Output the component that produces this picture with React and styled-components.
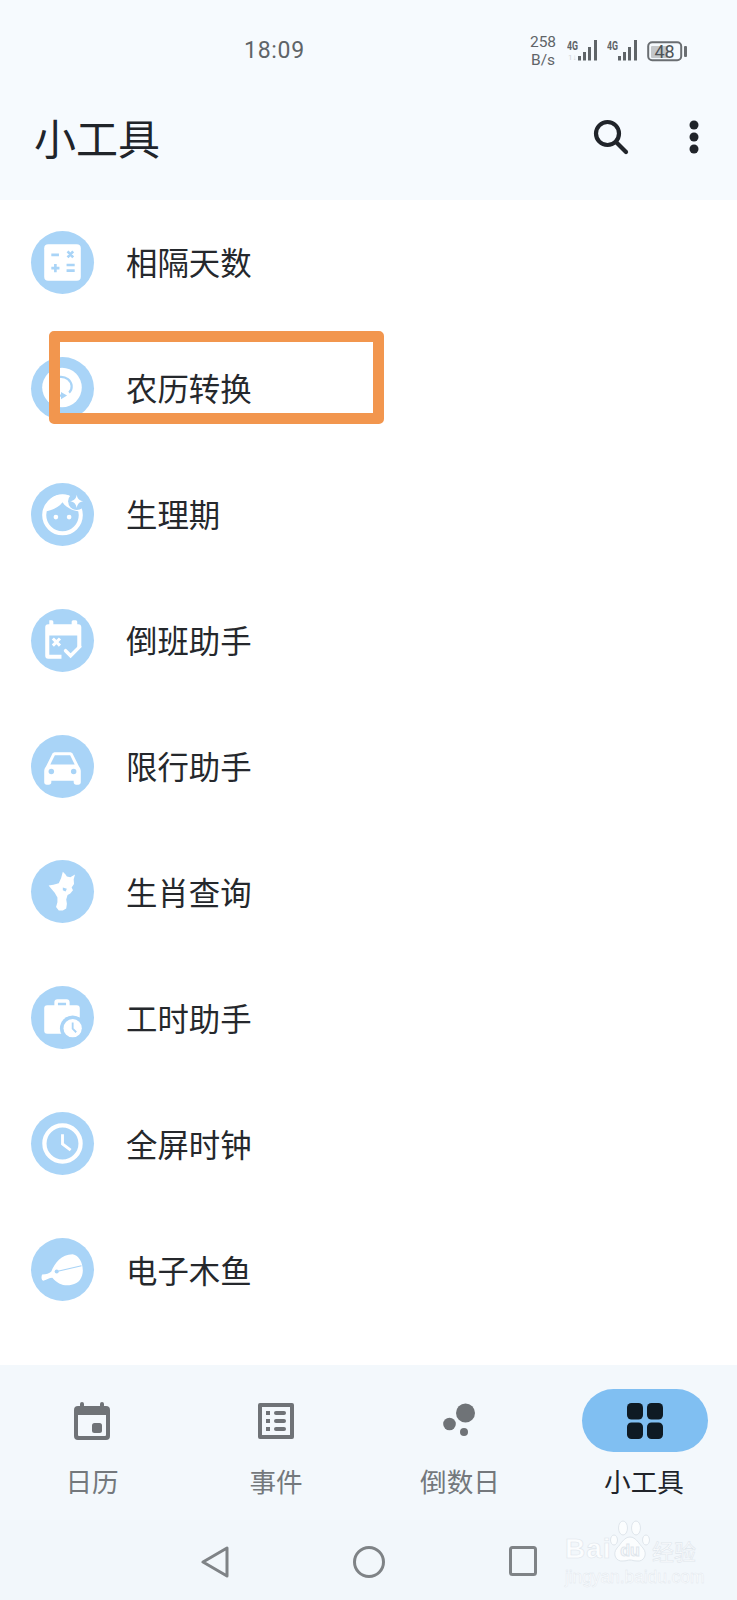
import React from 'react';
import styled, { createGlobalStyle } from 'styled-components';

const CJK = `"Noto Sans CJK SC", "Noto Sans", sans-serif`;
const BLUE = '#a9d4f7';
const GREY = '#6f7377';

const GlobalStyle = createGlobalStyle`
    html, body {
        margin: 0;
        padding: 0;
        background: #fff;
    }
`;

const Screen = styled.div`
    position: relative;
    display: flex;
    flex-direction: column;
    width: 737px;
    height: 1600px;
    overflow: hidden;
    background: #fff;
    font-family: ${CJK};
`;

const Top = styled.header`
    height: 199.5px;
    background: #f6fafe;
`;
const StatusBar = styled.div`
    display: flex;
    align-items: center;
    height: 101px;
    padding: 0 49px 0 244px;
    color: #5f6468;
    font-family: Roboto, sans-serif;
`;
const Time = styled.span`
    font-size: 23px;
    letter-spacing: 0.7px;
`;
const StatusRight = styled.div`
    display: flex;
    align-items: center;
    gap: 4px;
    margin-left: auto;
`;
const Speed = styled.div`
    width: 30px;
    margin-right: 5px;
    font-size: 15.5px;
    line-height: 18px;
    text-align: center;
`;
const TitleRow = styled.div`
    display: flex;
    align-items: center;
    height: 72px;
    padding: 0 38px 0 34px;
`;
const Title = styled.h1`
    flex: 1;
    margin: 0;
    color: #20242a;
    font-size: 42px;
    font-weight: 400;
    line-height: 72px;
`;
const HeaderActions = styled.div`
    display: flex;
    align-items: center;
    gap: 60px;
`;

const List = styled.main`
    flex: 1;
    background: #fff;
`;
const Row = styled.div`
    display: flex;
    align-items: center;
    gap: 32px;
    height: 125.9px;
    padding-left: 31px;
`;
const Badge = styled.div`
    display: flex;
    flex: none;
    width: 63px;
    height: 63px;
    border-radius: 50%;
    background: ${BLUE};
`;
const RowLabel = styled.span`
    color: #25282c;
    font-size: 31.4px;
    line-height: 40px;
`;

const Marker = styled.div`
    position: absolute;
    left: 49px;
    top: 331px;
    box-sizing: border-box;
    width: 335px;
    height: 93px;
    border: 11px solid #f2964e;
    border-radius: 5px;
`;

const TabBar = styled.nav`
    display: grid;
    flex: none;
    grid-template-columns: repeat(4, 184px);
    height: 155px;
    padding-top: 24px;
    box-sizing: border-box;
    background: #f3f8fc;
`;
const Tab = styled.div`
    display: flex;
    flex-direction: column;
    align-items: center;
`;
const TabIcon = styled.div`
    display: flex;
    align-items: center;
    justify-content: center;
    width: 126px;
    height: 63px;
    margin-left: ${(p) => (p.$active ? '2px' : '0')};
    border-radius: 32px;
    background: ${(p) => (p.$active ? '#80bff2' : 'transparent')};
`;
const TabLabel = styled.span`
    margin-top: 10px;
    color: ${(p) => (p.$active ? '#20242a' : '#74787c')};
    font-size: 26.6px;
    line-height: 38px;
`;

const NavBar = styled.div`
    display: flex;
    flex: none;
    align-items: flex-start;
    height: 80px;
    padding: 26px 0 0 201px;
    box-sizing: border-box;
    gap: 124px;
    background: #f2f7fb;
`;

const Watermark = styled.div`
    position: absolute;
    left: 565px;
    top: 1518px;
    width: 135px;
    height: 68px;
    color: #fbfdfe;
    -webkit-text-stroke: 0.6px #dfe6ec;
    font-family: "Liberation Sans", sans-serif;
`;
const MarkBai = styled.span`
    position: absolute;
    left: 0;
    top: 15px;
    font-size: 28px;
    font-weight: 700;
    letter-spacing: 1px;
    line-height: 32px;
`;
const MarkCn = styled.span`
    position: absolute;
    left: 87px;
    top: 19px;
    font-family: ${CJK};
    font-size: 22px;
    line-height: 26px;
`;
const MarkUrl = styled.span`
    position: absolute;
    left: 0;
    top: 49px;
    font-size: 17.5px;
    letter-spacing: -0.1px;
    line-height: 20px;
    -webkit-text-stroke: 0.4px #dfe6ec;
`;
const MarkPaw = styled.svg`
    position: absolute;
    left: 44px;
    top: 0;
`;

const Glyph = ({ children }) => (
    <svg width="63" height="63" viewBox="0 0 62 62" fill="#fff">
        {children}
    </svg>
);

const CalcIcon = () => (
    <Glyph>
        <rect x="13" y="13" width="36" height="36" rx="4" />
        <g stroke={BLUE} strokeWidth="2.6" fill="none">
            <path d="M20 23.5h7.5M36 20l5.500 6M41.500 20L36 26M20 36.500h8M24 32.500v8M35 33.500h8M35 39h8" />
        </g>
    </Glyph>
);
const LunarIcon = () => (
    <Glyph>
        <circle cx="30.500" cy="30" r="19.500" />
        <path d="M28.500 19.500c6-.5 11 3.500 11.500 9 .2 2.500-.7 5-2.500 6.500" stroke={BLUE} strokeWidth="2.200" fill="none" />
        <path d="M24 38h7" stroke={BLUE} strokeWidth="2.200" fill="none" />
        <path d="M29.500 34.500v7l6-3.500z" fill={BLUE} />
    </Glyph>
);
const FaceIcon = () => (
    <Glyph>
        <circle cx="31" cy="31.500" r="18" fill={BLUE} stroke="#fff" strokeWidth="4" />
        <path d="M14 28c5-1 13-3 17-9 3 5 9 8 17 9-1-11-8-17-17-17s-16 6-17 17z" />
        <circle cx="24.500" cy="33.500" r="2.300" />
        <circle cx="37.500" cy="33.500" r="2.300" />
        <circle cx="45" cy="18" r="8.500" fill={BLUE} />
        <path d="M45 11.500c.8 4 2.500 5.700 6.500 6.500-4 .8-5.700 2.500-6.500 6.500-.8-4-2.500-5.700-6.500-6.500 4-.8 5.700-2.500 6.500-6.500z" />
    </Glyph>
);
const ShiftIcon = () => (
    <Glyph>
        <path d="M18 11h2.500a1.500 1.500 0 0 1 1.500 1.500V15h18v-2.500a1.500 1.500 0 0 1 1.500-1.500H44a1.500 1.500 0 0 1 1.500 1.500V15h1a3 3 0 0 1 3 3v20h-4V26H18v19h12v4H17a3 3 0 0 1-3-3V18a3 3 0 0 1 3-3h1z" />
        <path d="M21.500 29l7 7M28.500 29l-7 7" stroke="#fff" strokeWidth="3" fill="none" />
        <path d="M34 41l5 5 9-9" stroke="#fff" strokeWidth="3.400" fill="none" strokeLinecap="round" />
    </Glyph>
);
const CarIcon = () => (
    <Glyph>
        <path d="M21 18.500c.5-1 1.500-1.500 3-1.500h14c1.500 0 2.500.5 3 1.500l6 12c1 1.500 2 3 2 5v11c0 1.500-1 2.500-2.500 2.500h-2c-1.500 0-2.500-1-2.500-2.500V45H20v1.500c0 1.500-1 2.500-2.500 2.500h-2C14 49 13 48 13 46.500v-11c0-2 1-3.500 2-5z" />
        <path d="M23.500 20h15l4.500 9H19z" fill={BLUE} />
        <circle cx="20" cy="36" r="2.700" fill={BLUE} />
        <circle cx="42" cy="36" r="2.700" fill={BLUE} />
    </Glyph>
);
const ZodiacIcon = () => (
    <Glyph>
        <g transform="translate(-2 -1) scale(.3333)">
            <path d="M100 38L108 46L112 52L122 54L136 46L132 60L133 74L126 84L130 92L122 102L114 106L110 120L112 132L110 146L100 152L88 152L80 142L84 128L84 114L76 100L66 88L58 78L72 76L88 72L95 56Z" />
            <path d="M100 84L112 88L108 96L100 92Z" fill={BLUE} />
        </g>
    </Glyph>
);
const WorkIcon = () => (
    <Glyph>
        <path d="M23 19v-3a3 3 0 0 1 3-3h9a3 3 0 0 1 3 3v3h7a3 3 0 0 1 3 3v25H16a3 3 0 0 1-3-3V22a3 3 0 0 1 3-3h7zm3.500 0h8v-2.500h-8z" fillRule="evenodd" />
        <circle cx="41" cy="41.500" r="12.500" fill={BLUE} />
        <circle cx="41" cy="41.500" r="9" />
        <path d="M41 36v6l3.500 3.500" stroke={BLUE} strokeWidth="1.800" fill="none" />
    </Glyph>
);
const ClockIcon = () => (
    <Glyph>
        <circle cx="31" cy="31" r="17.800" fill="none" stroke="#fff" strokeWidth="4.200" />
        <path d="M31 22v9.500l8 6" stroke="#fff" strokeWidth="2.800" fill="none" />
    </Glyph>
);
const FishIcon = () => (
    <Glyph>
        <path d="M11 36C15 36 18 35 20 33C23 25 30 16 41 16C47 17 51 24 51 32C51 39 47 45 40 46C33 48 26 45 21 39C18 39 15 41 12 42C10 41 10 38 11 36Z" />
        <path d="M25.300 33L49.700 27.300" stroke={BLUE} strokeWidth="1" fill="none" />
        <circle cx="25.300" cy="33" r="2" fill={BLUE} />
    </Glyph>
);

const TOOLS = [
    { label: '相隔天数', Icon: CalcIcon },
    { label: '农历转换', Icon: LunarIcon },
    { label: '生理期', Icon: FaceIcon },
    { label: '倒班助手', Icon: ShiftIcon },
    { label: '限行助手', Icon: CarIcon },
    { label: '生肖查询', Icon: ZodiacIcon },
    { label: '工时助手', Icon: WorkIcon },
    { label: '全屏时钟', Icon: ClockIcon },
    { label: '电子木鱼', Icon: FishIcon },
];

const Signal = ({ sub }) => (
    <svg width="36" height="24" viewBox="0 0 36 24" fill="#5f6468">
        <text x="0" y="11" fontFamily="Roboto, sans-serif" fontSize="12" fontWeight="700" textLength="11" lengthAdjust="spacingAndGlyphs">4G</text>
        {sub && <text x="1" y="21" fontFamily="Roboto, sans-serif" fontSize="8" fill="#cfd3d6">1↓</text>}
        <rect x="11" y="17" width="3" height="4.500" />
        <rect x="16" y="13" width="3" height="8.500" />
        <rect x="21" y="8" width="3" height="13.500" />
        <rect x="27" y="1" width="3" height="20.500" />
    </svg>
);

const Battery = () => (
    <svg width="41" height="24" viewBox="0 0 41 24">
        <rect x="4" y="7" width="17" height="12" rx="1" fill="#c4c7ca" />
        <rect x="1.200" y="3.200" width="33" height="18" rx="4" fill="none" stroke="#6a6e72" strokeWidth="2" />
        <rect x="37" y="7" width="3" height="11" rx="1" fill="#6a6e72" />
        <text x="17.500" y="19" fontFamily="Roboto, sans-serif" fontSize="18" fill="#4f5458" textAnchor="middle">48</text>
    </svg>
);

const SearchIcon = () => (
    <svg width="36" height="36" viewBox="0 0 36 36" fill="none" stroke="#20242a" strokeWidth="4.200" strokeLinecap="round">
        <circle cx="14.500" cy="14.500" r="11.500" />
        <path d="M23 23l10 10" />
    </svg>
);

const MoreIcon = () => (
    <svg width="10" height="34" viewBox="0 0 10 34" fill="#20242a">
        <circle cx="5" cy="5" r="4.500" />
        <circle cx="5" cy="17" r="4.500" />
        <circle cx="5" cy="29" r="4.500" />
    </svg>
);

const CalendarTab = () => (
    <svg width="36" height="38" viewBox="0 0 36 38" fill={GREY}>
        <path d="M6 4V2a2 2 0 0 1 4 0v2h16V2a2 2 0 0 1 4 0v2h2a4 4 0 0 1 4 4v26a4 4 0 0 1-4 4H4a4 4 0 0 1-4-4V8a4 4 0 0 1 4-4zM4 13v20a1 1 0 0 0 1 1h26a1 1 0 0 0 1-1V13z" fillRule="evenodd" />
        <rect x="18" y="21" width="10" height="10" rx="2.500" />
    </svg>
);
const EventsTab = () => (
    <svg width="36" height="36" viewBox="0 0 36 36" fill={GREY}>
        <path d="M2 0h32a2 2 0 0 1 2 2v32a2 2 0 0 1-2 2H2a2 2 0 0 1-2-2V2a2 2 0 0 1 2-2zm2 4v28h28V4z" fillRule="evenodd" />
        <rect x="8" y="8" width="4" height="4" />
        <rect x="8" y="16" width="4" height="4" />
        <rect x="8" y="24" width="4" height="4" />
        <rect x="16" y="8" width="12" height="4" rx="2" />
        <rect x="16" y="16" width="12" height="4" rx="2" />
        <rect x="16" y="24" width="12" height="4" rx="2" />
    </svg>
);
const CountdownTab = () => (
    <svg width="34" height="36" viewBox="0 0 34 36" fill={GREY}>
        <circle cx="22.500" cy="10" r="9.500" />
        <circle cx="6.500" cy="21" r="6.300" />
        <circle cx="21" cy="29" r="4" />
    </svg>
);
const ToolsTab = () => (
    <svg width="36" height="36" viewBox="0 0 36 36" fill="#0e1a24">
        <rect x="0" y="0" width="16" height="16.500" rx="4.500" />
        <rect x="20" y="0" width="16" height="16.500" rx="4.500" />
        <rect x="0" y="19.500" width="16" height="16.500" rx="4.500" />
        <rect x="20" y="19.500" width="16" height="16.500" rx="4.500" />
    </svg>
);

const TABS = [
    { label: '日历', Icon: CalendarTab },
    { label: '事件', Icon: EventsTab },
    { label: '倒数日', Icon: CountdownTab },
    { label: '小工具', Icon: ToolsTab, active: true },
];

const App = () => (
    <Screen>
        <GlobalStyle />
        <Top>
            <StatusBar>
                <Time>18:09</Time>
                <StatusRight>
                    <Speed>
                        258
                        <br />
                        B/s
                    </Speed>
                    <Signal sub />
                    <Signal />
                    <Battery />
                </StatusRight>
            </StatusBar>
            <TitleRow>
                <Title>小工具</Title>
                <HeaderActions>
                    <SearchIcon />
                    <MoreIcon />
                </HeaderActions>
            </TitleRow>
        </Top>
        <List>
            {TOOLS.map(({ label, Icon }) => (
                <Row key={label}>
                    <Badge>
                        <Icon />
                    </Badge>
                    <RowLabel>{label}</RowLabel>
                </Row>
            ))}
        </List>
        <TabBar>
            {TABS.map(({ label, Icon, active }) => (
                <Tab key={label}>
                    <TabIcon $active={active}>
                        <Icon />
                    </TabIcon>
                    <TabLabel $active={active}>{label}</TabLabel>
                </Tab>
            ))}
        </TabBar>
        <NavBar>
            <svg width="28" height="32" viewBox="0 0 28 32" fill="none" stroke="#7f8386" strokeWidth="3" strokeLinejoin="round">
                <path d="M26 2v28L2 16z" />
            </svg>
            <svg width="32" height="32" viewBox="0 0 32 32" fill="none" stroke="#7f8386" strokeWidth="3">
                <circle cx="16" cy="16" r="14.500" />
            </svg>
            <svg width="28" height="30" viewBox="0 0 28 30" fill="none" stroke="#7f8386" strokeWidth="3">
                <rect x="1.500" y="1.500" width="25" height="27" rx="2" />
            </svg>
        </NavBar>
        <Marker />
        <Watermark>
            <MarkBai>Bai</MarkBai>
            <MarkPaw width="44" height="46" viewBox="0 0 44 46" fill="#fbfdfe" stroke="#dfe6ec" strokeWidth="1">
                <ellipse cx="5" cy="22" rx="3.500" ry="5" />
                <ellipse cx="14" cy="10" rx="4.500" ry="7" />
                <ellipse cx="27" cy="10" rx="4.500" ry="7" />
                <ellipse cx="37" cy="22" rx="3.500" ry="5" />
                <path d="M21 19c6 0 9 7 13 11 5 6 1 14-6 13-3 0-5-1-7-1s-4 1-7 1c-7 1-11-7-6-13 4-4 7-11 13-11z" />
                <text x="21" y="38" fontSize="16" fontWeight="700" textAnchor="middle" fontFamily="Liberation Sans, sans-serif">du</text>
            </MarkPaw>
            <MarkCn>经验</MarkCn>
            <MarkUrl>jingyan.baidu.com</MarkUrl>
        </Watermark>
    </Screen>
);

export default App;
